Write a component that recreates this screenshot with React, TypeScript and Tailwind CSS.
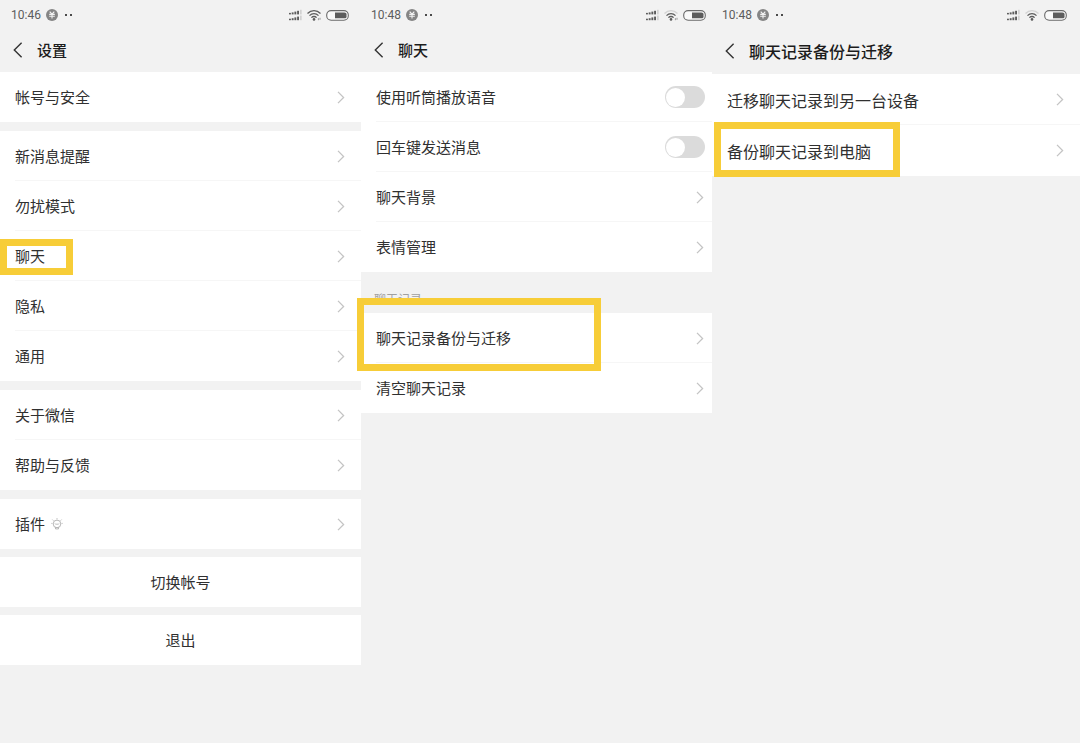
import { useId } from 'react';
import type { ReactNode } from 'react';
import clsx from 'clsx';

interface StatusBarProps {
  time: string;
  className: string;
  weakWifi?: boolean;
  wifiData?: boolean;
}

interface RowProps {
  label: string;
  className?: string;
  divider?: boolean;
  icon?: ReactNode;
  highlight?: string;
}

function SignalIcon() {
  return (
    <svg width="14" height="12" viewBox="0 0 14 12" fill="#5c5c5c" aria-hidden="true">
      {[5.4, 11.2].map((base) => (
        <g key={base}>
          <rect x="1" y={base - 1.5} width="1.9" height="1.5" />
          <rect x="3.7" y={base - 2} width="1.9" height="2" />
          <rect x="6.4" y={base - 2.8} width="1.9" height="2.8" />
          <rect x="9.1" y={base - 3.6} width="1.9" height="3.6" />
          <rect x="12.4" y={base - 4.6} width="1" height="4.6" opacity="0.35" />
        </g>
      ))}
    </svg>
  );
}

function WifiIcon({ weak, data }: { weak?: boolean; data?: boolean }) {
  return (
    <svg width="14" height="12" viewBox="0 0 14 12" fill="none" stroke="#5c5c5c" strokeWidth="1.3" aria-hidden="true">
      <path d="M0.5 4.5C4.2 0.7 9.8 0.7 13.5 4.5" opacity={weak ? 0.2 : 1} />
      <path d="M2.5 6.6C5 4 9 4 11.5 6.6" />
      <path d="M4.4 8.6C5.9 7.1 8.1 7.1 9.6 8.6" />
      <circle cx="7" cy="10.4" r="1.3" fill="#5c5c5c" stroke="none" />
      {data && <path d="M11.4 9.2v2M13 8.8v2" strokeWidth="1" opacity="0.6" />}
    </svg>
  );
}

function BatteryIcon() {
  return (
    <svg width="23" height="11" viewBox="0 0 23 11" aria-hidden="true">
      <rect x="0.7" y="0.6" width="21.6" height="9.6" rx="4.4" fill="#fafafa" stroke="#6a6a6a" strokeWidth="1.1" />
      <path d="M9 2.5h9.2a2.4 2.4 0 0 1 2.3 2.9 2.4 2.4 0 0 1-2.3 2.9H9z" fill="#5c5c5c" />
    </svg>
  );
}

function YenIcon() {
  return (
    <svg width="12" height="12" viewBox="0 0 12 12" aria-hidden="true">
      <circle cx="6" cy="6" r="6" fill="#858585" />
      <path d="M3.7 2.6L6 5.2l2.3-2.6M3.2 5.4h5.6M3.2 7.3h5.6M6 5.2v4.4" fill="none" stroke="#f2f2f2" strokeWidth="1.1" />
    </svg>
  );
}

function BulbIcon() {
  return (
    <svg width="12" height="12" viewBox="0 0 12 12" fill="none" stroke="#a3a3a3" strokeWidth="0.8" aria-hidden="true">
      <circle cx="6" cy="5.9" r="3.8" />
      <path d="M4.5 9.4v1.5h3V9.4M4 5.4l1.1 1.2L6 5.7l0.9 0.9L8 5.4" />
      <path d="M6 0.2v1.1M1.4 1.6l1 1M10.6 1.6l-1 1M0.4 5.4h1M10.6 5.4h1" />
    </svg>
  );
}

function Chevron() {
  return (
    <svg width="8" height="13" viewBox="0 0 8 13" fill="none" stroke="#c4c4c4" strokeWidth="1.3" aria-hidden="true">
      <path d="M1 0.9l5.6 5.6L1 12.1" />
    </svg>
  );
}

function StatusBar({ time, className, weakWifi, wifiData }: StatusBarProps) {
  return (
    <div className={clsx('flex h-[30px] items-center justify-between', className)}>
      <div className="flex items-center gap-[5px] text-[#5c5c5c]">
        <span className="font-[Roboto,sans-serif] text-xs">{time}</span>
        <YenIcon />
        <svg width="16" height="4" viewBox="0 0 16 4" fill="#4a4a4a" aria-hidden="true">
          <rect x="2" y="1" width="2" height="2" />
          <rect x="7" y="1" width="2" height="2" />
        </svg>
      </div>
      <div className="flex items-center gap-[5px]">
        <SignalIcon />
        <WifiIcon weak={weakWifi} data={wifiData} />
        <BatteryIcon />
      </div>
    </div>
  );
}

function TitleBar({ title, className }: { title: string; className: string }) {
  return (
    <div className={clsx('flex items-center gap-[14px] pb-[2px] pl-[13px] text-[#1c1c1c]', className)}>
      <button type="button" aria-label="返回">
        <svg width="10" height="16" viewBox="0 0 10 16" fill="none" stroke="#333" strokeWidth="1.4">
          <path d="M8.6 0.8L1.3 8l7.3 7.2" />
        </svg>
      </button>
      <h1 className="font-medium">{title}</h1>
    </div>
  );
}

function Divider() {
  return <span className="absolute right-0 bottom-0 left-[15px] h-px bg-[#f6f6f6]" />;
}

function Row({ label, className = 'h-[50px] pr-4', divider, icon, highlight }: RowProps) {
  return (
    <button type="button" className={clsx('relative flex w-full items-center justify-between bg-white pl-[15px]', className)}>
      <span className="flex items-center gap-[6px]">
        {label}
        {icon}
      </span>
      <Chevron />
      {divider && <Divider />}
      {highlight && <span className={clsx('absolute z-10 border-7 border-[#f7cd38]', highlight)} />}
    </button>
  );
}

function SwitchRow({ label }: { label: string }) {
  const id = useId();
  return (
    <div className="relative flex h-[50px] items-center justify-between bg-white pr-[7px] pl-[15px]">
      <label htmlFor={id}>{label}</label>
      <input
        id={id}
        type="checkbox"
        role="switch"
        className="flex h-[22px] w-10 appearance-none items-center rounded-full bg-[#dbdbdb] pl-px before:size-[19px] before:rounded-full before:bg-white checked:justify-end checked:bg-[#07c160] checked:pr-px"
      />
      <Divider />
    </div>
  );
}

function SettingsScreen() {
  return (
    <section className="text-[15px]">
      <StatusBar time="10:46" className="pr-3 pl-[11px]" wifiData />
      <TitleBar title="设置" className="h-[42px]" />
      <div className="flex flex-col gap-[9px]">
        <Row label="帐号与安全" />
        <div>
          <Row label="新消息提醒" divider />
          <Row label="勿扰模式" divider />
          <Row label="聊天" divider highlight="top-2 left-0 h-9 w-[73px]" />
          <Row label="隐私" divider />
          <Row label="通用" />
        </div>
        <div>
          <Row label="关于微信" divider />
          <Row label="帮助与反馈" />
        </div>
        <Row label="插件" icon={<BulbIcon />} />
      </div>
      <div className="mt-2 flex flex-col gap-2">
        <button type="button" className="h-[50px] bg-white">切换帐号</button>
        <button type="button" className="h-[50px] bg-white">退出</button>
      </div>
    </section>
  );
}

function ChatScreen() {
  return (
    <section className="text-[15px]">
      <StatusBar time="10:48" className="pr-[6px] pl-[10px]" weakWifi wifiData />
      <TitleBar title="聊天" className="h-[42px]" />
      <SwitchRow label="使用听筒播放语音" />
      <SwitchRow label="回车键发送消息" />
      <Row label="聊天背景" className="h-[50px] pr-2" divider />
      <Row label="表情管理" className="h-[50px] pr-2" />
      <h2 className="flex h-[41px] items-end pb-[6px] pl-[13px] text-xs text-[#a0a0a0]">聊天记录</h2>
      <Row
        label="聊天记录备份与迁移"
        className="h-[50px] pr-2"
        divider
        highlight="-top-[15px] -left-1 h-[73px] w-[244px]"
      />
      <Row label="清空聊天记录" className="h-[50px] pr-2" />
    </section>
  );
}

function BackupScreen() {
  return (
    <section className="text-base">
      <StatusBar time="10:48" className="pr-[13px] pl-[10px]" weakWifi />
      <TitleBar title="聊天记录备份与迁移" className="h-11" />
      <Row label="迁移聊天记录到另一台设备" className="h-[51px] pr-4" divider />
      <Row
        label="备份聊天记录到电脑"
        className="h-[51px] pr-4"
        highlight="-top-[3px] left-[2px] h-[55px] w-[186px]"
      />
    </section>
  );
}

export default function App() {
  return (
    <main className="grid min-h-screen grid-cols-[361fr_351fr_368fr] bg-[#f2f2f2] font-['Noto_Sans_CJK_SC',sans-serif] text-[#303030]">
      <SettingsScreen />
      <ChatScreen />
      <BackupScreen />
    </main>
  );
}
